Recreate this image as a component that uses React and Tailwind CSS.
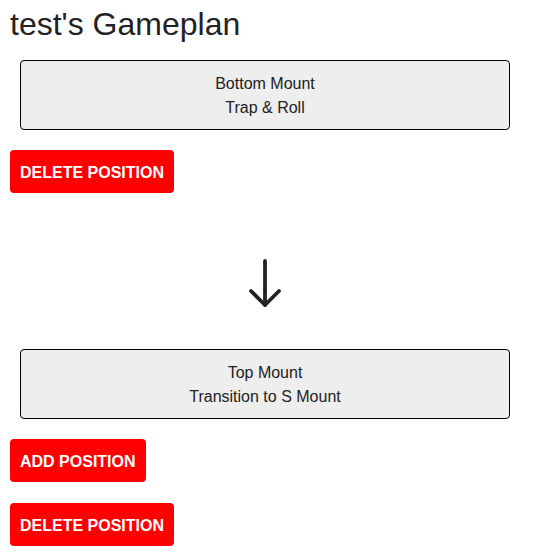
import React from "react";

function Card({ title, sub }) {
  return (
    <div className="ml-[20px] w-[490px] rounded-[4px] border border-black bg-[#eeeeee] px-[10px] pb-[9px] pt-[11px] text-center text-[16px] leading-[24px] text-[#222222]">
      <div>{title}</div>
      <div>{sub}</div>
    </div>
  );
}

function Btn({ children, className = "" }) {
  return (
    <button className={"flex h-[43px] items-center rounded-[4px] bg-[#ff0000] px-[10px] pt-[2px] text-[16px] font-bold text-white " + className}>
      {children}
    </button>
  );
}

export default function App() {
  return (
    <div className="w-[556px] bg-white font-['Liberation_Sans',Arial,sans-serif]">
      <h1 className="ml-[10px] mt-[6px] text-[32px] leading-[37px] text-[#222222]">test's Gameplan</h1>
      <div className="mt-[17px]">
        <Card title="Bottom Mount" sub="Trap & Roll" />
      </div>
      <Btn className="ml-[10px] mt-[20px]">DELETE POSITION</Btn>
      <div className="ml-[20px] mt-[65px] flex w-[490px] justify-center">
        <svg width="34" height="50" viewBox="0 0 34 50" fill="none" stroke="#222222" strokeWidth="3.8" strokeLinecap="round" strokeLinejoin="round">
          <line x1="17" y1="3" x2="17" y2="47" />
          <polyline points="3,33 17,47 31,33" />
        </svg>
      </div>
      <div className="mt-[41px]">
        <Card title="Top Mount" sub="Transition to S Mount" />
      </div>
      <Btn className="ml-[10px] mt-[20px]">ADD POSITION</Btn>
      <Btn className="ml-[10px] mt-[21px]">DELETE POSITION</Btn>
      <div className="h-[10px]" />
    </div>
  );
}
